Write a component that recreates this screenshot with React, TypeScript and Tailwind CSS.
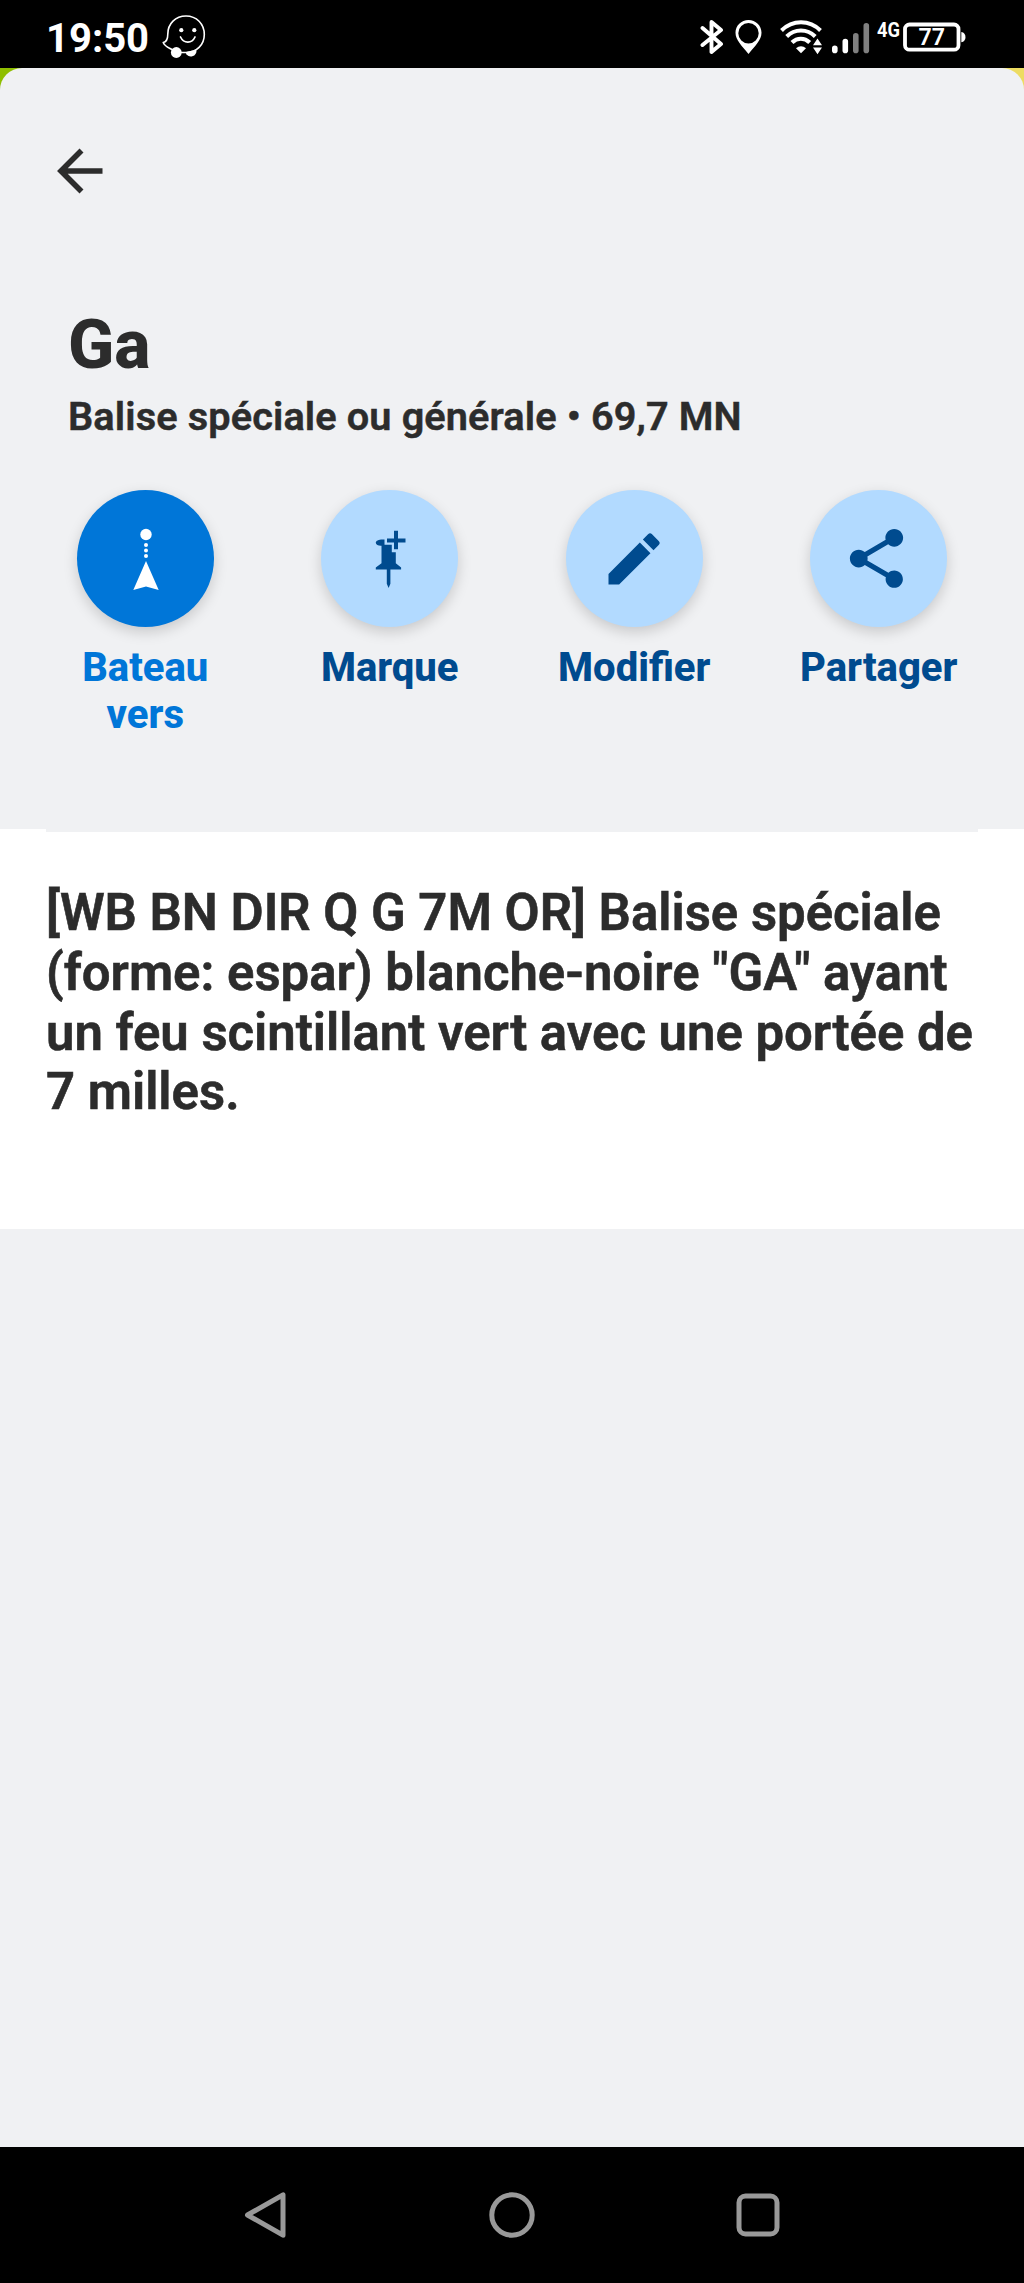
import type { ReactNode } from "react";
import { MdEdit, MdShare } from "react-icons/md";

type Action = {
  label: string;
  icon: ReactNode;
  primary?: boolean;
};

function BoatToIcon() {
  return (
    <svg width="68" height="68" viewBox="0 0 68 68" fill="currentColor" className="ml-[2px]">
      <circle cx="34" cy="9.5" r="5.7" />
      <circle cx="34" cy="20" r="2" />
      <circle cx="34" cy="25.5" r="2" />
      <circle cx="34" cy="31" r="2" />
      <path d="M34 36 46.7 65 34 61.5 21.3 65Z" />
    </svg>
  );
}

function AddMarkIcon() {
  return (
    <svg width="68" height="68" viewBox="0 0 68 68" fill="currentColor" className="mr-[1px]">
      <path d="M29.5 14.6C25 14 20.8 15.3 20.8 17.8c0 2.2 2.8 3.2 5.7 3v17.500l-5.700 4.200v1.900h11v14.300l1.800 4.300 1.800-4.300V44.400h10.700v-1.900l-5.300-4.200V27.300h-4v-7.600h-7.300Z" />
      <path d="M39 5.8h4v7.600h7.500v4H43v6.900h-4v-6.900h-7v-4h7Z" />
    </svg>
  );
}

function WazeIcon() {
  return (
    <svg width="44" height="44" viewBox="0 0 44 44" fill="none" className="ml-[14px]">
      <path
        d="M8 33.5C4 31.5 2 29.5 1.2 27.5 4.500 27 5.800 24.500 5.800 19 5.800 8.700 13.500 1 24 1c10.500 0 18.300 8 18.300 18.500S34.500 37.500 24 37.500h-5C14.500 37 11 35.500 8 33.500Z"
        stroke="#fff"
        strokeWidth="1.6"
        strokeLinejoin="round"
      />
      <circle cx="14.3" cy="37.5" r="5.4" fill="#fff" />
      <path d="M23.5 37.3 34.3 34.5a5.500 5.500 0 1 1-10.800 2.800Z" fill="#fff" />
      <circle cx="19.3" cy="15.2" r="2.1" fill="#fff" />
      <circle cx="32.3" cy="15.2" r="2.1" fill="#fff" />
      <path d="M18.5 22c3.200 6.700 11.500 6.700 14.500 0" stroke="#fff" strokeWidth="1.7" strokeLinecap="round" />
    </svg>
  );
}

function StatusBar() {
  return (
    <header className="flex h-[68px] items-start bg-black text-white">
      <span className="ml-[46px] mt-[15px] w-[102px] text-[40px] leading-[47px] font-bold">19:50</span>
      <div className="mt-[15px]">
        <WazeIcon />
      </div>

      <div className="ml-auto mr-[55px] mt-[18px] flex h-[40px] items-start">
        <svg width="24" height="38" viewBox="0 0 24 38" fill="none" className="mr-[11px]">
          <path d="M2.5 10 21 26 11.5 34V4L21 12 2.5 27" stroke="#fff" strokeWidth="3.9" strokeLinejoin="round" strokeLinecap="round" />
        </svg>
        <svg width="28" height="38" viewBox="0 0 28 38" fill="#fff" className="mr-[17px]">
          <path
            fillRule="evenodd"
            d="M13.5 2C6.3 2 .5 7.6.5 14.8.5 22 7 28 13.5 36 20 28 26.5 22 26.5 14.8 26.5 7.6 20.7 2 13.5 2Zm0 3a10.200 10.200 0 1 1 0 20.400 10.200 10.200 0 0 1 0-20.400Z"
          />
        </svg>
        <svg width="43" height="38" viewBox="0 0 43 38" fill="none" className="mr-[9px]">
          <path d="M1.5 12.5c11-11 28-11 39 0" stroke="#fff" strokeWidth="4" />
          <path d="M6.7 18.5c8-8 20.500-8 28.500 0" stroke="#fff" strokeWidth="4" />
          <path d="M12 24.5c5.200-5 12.500-5 17.700 0" stroke="#fff" strokeWidth="4.2" />
          <path d="M16 30.3c3-2.700 7-2.700 10 0L21 35.300Z" fill="#fff" />
          <path d="M37.5 20.5 42 27.3h-9ZM33 29.500h9l-4.500 6.800Z" fill="#fff" />
        </svg>
        <svg width="38" height="38" viewBox="0 0 38 38" className="mr-[7px]">
          <rect x="0" y="27.5" width="5.6" height="7.7" rx="2.8" fill="#fff" />
          <rect x="10.5" y="20.7" width="5.6" height="14.5" rx="2.8" fill="#fff" />
          <rect x="21" y="15" width="5.6" height="20.2" rx="2.8" fill="#808080" />
          <rect x="31.5" y="5" width="5.6" height="30.2" rx="2.8" fill="#808080" />
        </svg>
        <svg width="24" height="38" viewBox="0 0 24 38" className="mr-[2px] overflow-visible">
          <text x="0" y="19" fontSize="20" fontWeight="700" fill="#fff" textLength="23" lengthAdjust="spacingAndGlyphs" className="font-[Roboto]">
            4G
          </text>
        </svg>
        <svg width="66" height="38" viewBox="0 0 66 38" fill="none">
          <rect x="2" y="6.5" width="53.5" height="25.2" rx="4.5" stroke="#fff" strokeWidth="3.8" />
          <path d="M58.3 14c5.600.500 5.600 9.800 0 10.300Z" fill="#fff" />
          <text x="15.5" y="27" fontSize="23" fontWeight="600" fill="#fff" textLength="26.5" lengthAdjust="spacingAndGlyphs" className="font-[Roboto]">
            77
          </text>
        </svg>
      </div>
    </header>
  );
}

function ActionButton({ action }: { action: Action }) {
  return (
    <button className="flex flex-col items-center">
      <span
        className={
          action.primary
            ? "flex size-[137px] items-center justify-center rounded-full bg-[#0076d8] text-white shadow-[0_5px_14px_rgba(0,0,0,0.17)]"
            : "flex size-[137px] items-center justify-center rounded-full bg-[#b2daff] text-[#004b8f] shadow-[0_5px_14px_rgba(0,0,0,0.17)]"
        }
      >
        {action.icon}
      </span>
      <span
        className={
          action.primary
            ? "mt-[18px] w-[170px] text-center text-[40px] leading-[46.5px] font-extrabold text-[#0076d8]"
            : "mt-[18px] text-center text-[40px] leading-[46.5px] font-extrabold text-[#004b8f]"
        }
      >
        {action.label}
      </span>
    </button>
  );
}

const actions: Action[] = [
  { label: "Bateau vers", icon: <BoatToIcon />, primary: true },
  { label: "Marque", icon: <AddMarkIcon /> },
  { label: "Modifier", icon: <MdEdit size={68} /> },
  { label: "Partager", icon: <MdShare size={71} className="mr-[4px]" /> },
];

export default function App() {
  return (
    <div className="flex h-[2283px] w-[1024px] flex-col overflow-hidden bg-black font-[Roboto,sans-serif] text-[#2c2c2c]">
      <StatusBar />

      {/* map strip shows behind the rounded corners of the sheet */}
      <div className="flex h-[2078.5px] flex-col bg-linear-to-r from-[#8fbe00] from-50% to-[#eddc62] to-50%">
        <main className="flex-1 rounded-t-[22px] bg-[#f0f1f3]">
          <div className="h-[761px] pt-[68px]">
            <button className="ml-[46px] block size-[68px]" aria-label="Retour">
              <svg width="68" height="68" viewBox="0 0 68 68" fill="none" stroke="#2c2c2c" strokeWidth="5.6">
                <path d="M56.5 35H16M35.5 14.5 15 35l20.500 20.500" />
              </svg>
            </button>

            <h1 className="ml-[68px] mt-[101px] text-[68px] leading-[80px] font-extrabold">Ga</h1>
            <p className="ml-[68px] mt-[8px] text-[39.7px] leading-[47px] font-semibold tracking-[0.13px] [-webkit-text-stroke:0.5px_#2c2c2c]">
              Balise spéciale ou générale • 69,7 MN
            </p>

            <div className="mx-[23px] mt-[50px] grid grid-cols-4">
              {actions.map((a) => (
                <ActionButton key={a.label} action={a} />
              ))}
            </div>
          </div>

          <section className="h-[400px] bg-white">
            <hr className="mx-[46px] h-[3px] border-0 bg-[#f0f1f3]" />
            <p className="mx-[46px] pt-[51px] text-[50.9px] leading-[59.8px] font-semibold whitespace-nowrap [-webkit-text-stroke:0.6px_#2c2c2c]">
              [WB BN DIR Q G 7M OR] Balise spéciale
              <br />
              (forme: espar) blanche-noire "GA" ayant
              <br />
              un feu scintillant vert avec une portée de
              <br />7 milles.
            </p>
          </section>
        </main>
      </div>

      <nav className="flex flex-1 items-center justify-center gap-[200px] text-[#999]">
        <svg width="46" height="48" viewBox="0 0 46 48" fill="none" stroke="currentColor" strokeWidth="5" strokeLinejoin="round">
          <path d="M40 3.8v40.400L4.500 24Z" />
        </svg>
        <svg width="46" height="48" viewBox="0 0 46 48" fill="none" stroke="currentColor" strokeWidth="5">
          <circle cx="23" cy="24" r="20.2" />
        </svg>
        <svg width="46" height="48" viewBox="0 0 46 48" fill="none" stroke="currentColor" strokeWidth="5">
          <rect x="4" y="5" width="38" height="38" rx="6.5" />
        </svg>
      </nav>
    </div>
  );
}
